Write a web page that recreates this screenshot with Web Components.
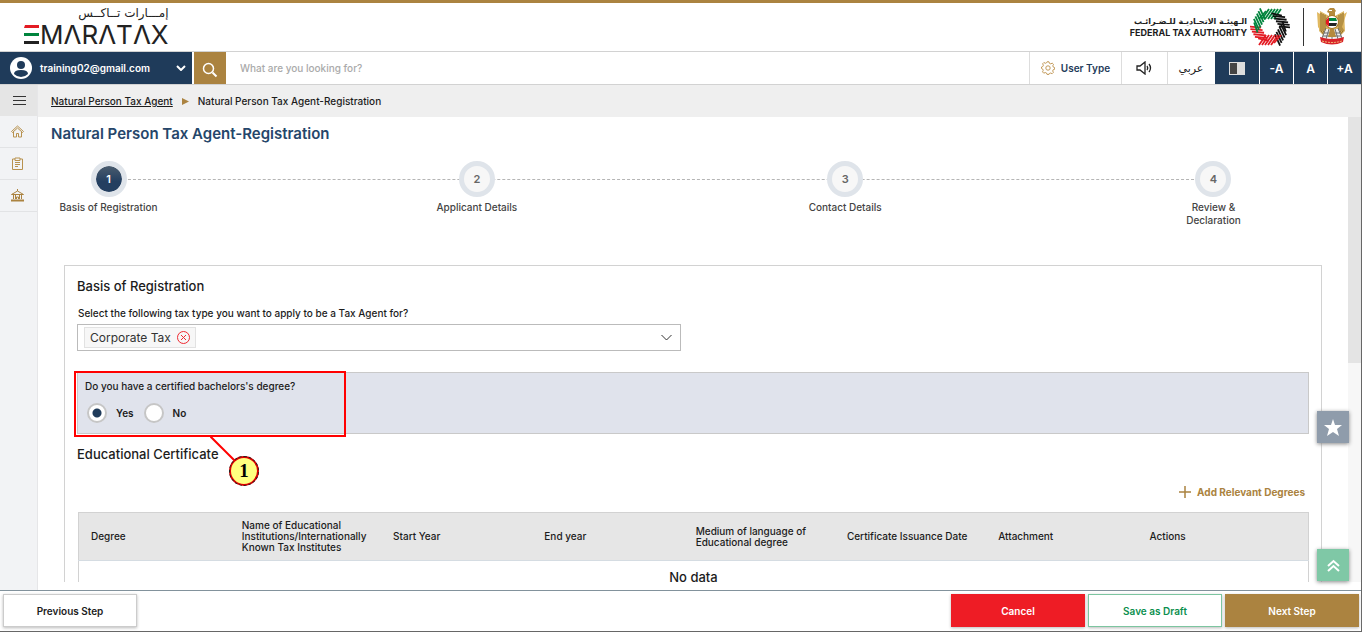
<!DOCTYPE html>
<html lang="en">
<head>
<meta charset="UTF-8">
<meta name="viewport" content="width=device-width, initial-scale=1">
<title>EmaraTax - Natural Person Tax Agent-Registration</title>
<style>
  html, body {
    height: 100%;
  }
  body {
    --navy: #1f3b5a;
    --gold: #ab8340;
    --line: #d2d2d2;
    --text: #1c1c1c;
    margin: 0;
    padding: 0 4px 5px 0;
    box-sizing: border-box;
    background: #fff;
    color: var(--text);
    font-family: Inter, "DejaVu Sans", sans-serif;
    font-size: 10px;
    font-weight: 500;
    overflow: hidden;
  }
</style>
</head>
<body>
<tax-app>
  <tax-header slot="header"></tax-header>
  <tax-toolbar slot="toolbar" user="training02@gmail.com"></tax-toolbar>
  <tax-sidebar slot="sidebar"></tax-sidebar>
  <tax-breadcrumb slot="breadcrumb">
    <a href="#agent" slot="parent">Natural Person Tax Agent</a>
    Natural Person Tax Agent-Registration
  </tax-breadcrumb>

  <page-title>Natural Person Tax Agent-Registration</page-title>
  <step-bar>
    <step-item number="1" active>Basis of Registration</step-item>
    <step-item number="2">Applicant Details</step-item>
    <step-item number="3">Contact Details</step-item>
    <step-item number="4">Review &amp; Declaration</step-item>
  </step-bar>
  <form-panel>
    <section-title>Basis of Registration</section-title>
    <tag-select label="Select the following tax type you want to apply to be a Tax Agent for?" value="Corporate Tax"></tag-select>
    <yes-no-question label="Do you have a certified bachelors's degree?">
      <call-out>1</call-out>
    </yes-no-question>
    <section-title>Educational Certificate</section-title>
    <degree-table></degree-table>
  </form-panel>

  <float-actions slot="float"></float-actions>
  <action-bar slot="footer"></action-bar>
</tax-app>

<script>
// Base class: every element only has to give its markup and its style
class TaxElement extends HTMLElement {
  constructor() {
    super();
    this.attachShadow({ mode: 'open' });
  }
  getTemplate() {
    const template = document.createElement('template');
    template.innerHTML = `
      <style>
        :host, *, *::before, *::after { box-sizing: border-box; }
        button, input, select { font: inherit; color: inherit; margin: 0; padding: 0; border: 0; background: none; border-radius: 0; }
        button { cursor: pointer; }
        svg { display: block; flex: none; }
        ${this.getStyle()}
      </style>
      ${this.getMarkup()}`;
    return template;
  }
  getMarkup() {
    return '<slot></slot>';
  }
  getStyle() {
    return '';
  }
  render() {
    this.shadowRoot.appendChild(this.getTemplate().content.cloneNode(true));
  }
  connectedCallback() {
    if (!this.shadowRoot.childNodes.length) this.render();
  }
}

// Page frame
class TaxApp extends TaxElement {
  getMarkup() {
    return `
      <slot name="header"></slot>
      <slot name="toolbar"></slot>
      <div class="body">
        <slot name="sidebar"></slot>
        <div class="column">
          <slot name="breadcrumb"></slot>
          <div class="view">
            <main><slot></slot></main>
            <div class="track"><div class="thumb"></div></div>
          </div>
        </div>
        <slot name="float"></slot>
      </div>
      <slot name="footer"></slot>`;
  }
  getStyle() {
    return `
      :host { display: flex; flex-direction: column; height: 100%; border-right: 1px solid #666; border-bottom: 1px solid #666; }
      .body { flex: 1; display: flex; min-height: 0; position: relative; }
      .column { flex: 1; min-width: 0; display: flex; flex-direction: column; }
      .view { flex: 1; min-height: 0; display: flex; padding-bottom: 8px; }
      main { flex: 1; min-width: 0; padding: 7px 26px 0 13px; overflow: hidden; }
      .track { width: 13px; background: #f7f7f7; }
      .thumb { height: 53%; background: #e4e4e4; }`;
  }
}
customElements.define('tax-app', TaxApp);

// Top strip with the two logos
class TaxHeader extends TaxElement {
  // Six blades of parallel stripes turned round the centre
  getRing() {
    const colors = ['#00843d', '#111', '#111', '#e31b23', '#e31b23', '#00843d'];
    return colors.map((color, i) => {
      let lines = '';
      for (let n = 0; n < 6; n++) {
        const x = -11 + n * 3;
        lines += `<path d="M${x} -8 L${x + 7} ${n === 0 ? -16 : -18}"/>`;
      }
      return `<g stroke="${color}" transform="rotate(${i * 60})">${lines}</g>`;
    }).join('');
  }
  getMarkup() {
    return `
      <div class="brand">
        <span class="ar" lang="ar" dir="rtl">إمـــارات تــاكــس</span>
        <span class="en">
          <svg width="15" height="20" viewBox="0 0 15 20"><path fill="#e31b23" d="M1 0h14v3H0z"/><path fill="#00843d" d="M0 8h15v3H0z"/><path fill="#222" d="M0 16h15v3H0z"/></svg><span>MΛRΛTΛX</span>
        </span>
      </div>
      <div class="authority">
        <div class="name">
          <span lang="ar" dir="rtl">الـهيئـة الاتحـاديـة للـضـرائـب</span>
          <span>FEDERAL TAX AUTHORITY</span>
        </div>
        <svg width="40" height="40" viewBox="-20 -20 40 40" fill="none" stroke-width="1.800">${this.getRing()}</svg>
        <i></i>
        <svg width="30" height="38" viewBox="0 0 30 38">
          <path fill="#dcb765" d="M3 3l9 5h6l9-5 1 20-7 7H9l-7-7z"/>
          <g fill="none" stroke="#8f6a24" stroke-width="1">
            <path d="M4 5v18l4 5M6 6v17l3 4M8 7v15M26 5v18l-4 5M24 6v17l-3 4M22 7v15"/>
          </g>
          <path fill="#e0b860" d="M0 4l3 2v16l-2-3zM30 4l-3 2v16l-2-3z"/>
          <path fill="#b58a3c" d="M11 2l2-2h4l2 3-1 1v5h-6V5l-2-1z"/>
          <path fill="#fff" d="M12 2h3v1h-3z"/>
          <circle cx="15" cy="14" r="7" fill="#a87a2a"/><circle cx="15" cy="14" r="6" fill="#fff"/>
          <path fill="#00843d" d="M11 10h8l1 3h-8z"/><path fill="#222" d="M12 15h8l-1 3h-7z"/><path fill="#e31b23" d="M9 12l3-3v10l-3-3z"/>
          <path fill="#eee" d="M9 21h12l4 9H5z"/>
          <path fill="none" stroke="#6d6d6d" stroke-width="1" d="M9 20 5 30M12 21 9 31M15 21v11M18 21l3 10M21 20l4 10M7 25h16M6 28h18"/>
          <path fill="#b58a3c" d="M13 21h4l2 8h-8z"/>
          <path fill="#d8232a" d="M3 29q12 4 24 0l-1 5q-11 5-22 0z"/>
          <path fill="none" stroke="#f0c27a" stroke-width="1" stroke-dasharray="2 1" d="M5 33q10 3 20 0"/>
        </svg>
      </div>`;
  }
  getStyle() {
    return `
      :host { display: flex; justify-content: space-between; height: 52px; padding: 0 14px 0 24px; border-top: 3px solid var(--gold); border-bottom: 1px solid var(--line); }
      .brand { display: flex; flex-direction: column; color: #222; }
      .ar { font: 12px/20px "DejaVu Sans", sans-serif; text-align: left; align-self: flex-end; }
      .en { display: flex; align-items: center; gap: 1px; font-size: 26px; line-height: 24px; font-weight: 400; }
      .authority { display: flex; align-items: center; gap: 3px; }
      .name { display: flex; flex-direction: column; align-items: flex-end; font-size: 9px; line-height: 11px; font-weight: 700; }
      .name :first-child { font-family: "DejaVu Sans", sans-serif; font-size: 8px; }
      i { width: 1px; height: 38px; margin: 0 10px; background: #333; }`;
  }
}
customElements.define('tax-header', TaxHeader);

// User menu, search and accessibility tools
class TaxToolbar extends TaxElement {
  getMarkup() {
    return `
      <button class="user">
        <svg width="22" height="22" viewBox="0 0 22 22"><circle cx="11" cy="11" r="11" fill="#fff"/><circle cx="11" cy="8" r="4" fill="#1f3b5a"/><path fill="#1f3b5a" d="M4 17q0-4 7-4t7 4q-3 3-7 3t-7-3z"/></svg>
        <span>${this.getAttribute('user')}</span>
        <svg width="10" height="6" viewBox="0 0 10 6" fill="none" stroke="#fff" stroke-width="2"><path d="M1 1l4 4 4-4"/></svg>
      </button>
      <button class="search" aria-label="Search">
        <svg width="16" height="16" viewBox="0 0 16 16" fill="none" stroke="#fff"><circle cx="6.500" cy="6.500" r="5" stroke-width="1.500"/><path stroke-width="2" d="M10.500 10.500 14.500 14.500"/></svg>
      </button>
      <input type="search" placeholder="What are you looking for?" aria-label="What are you looking for?">
      <button class="type">
        <svg width="14" height="14" viewBox="0 0 14 14" fill="none" stroke="#c39a5a"><path d="M6 .8h2l.4 1.500 1.400.6 1.400-.8 1.300 1.300-.7 1.400.5 1.300 1.300.4v1.800l-1.400.4-.5 1.300.7 1.400-1.300 1.300-1.400-.7-1.400.5L8 13.400H6l-.5-1.400-1.300-.5-1.400.7-1.300-1.300.7-1.400L1.700 8 .5 7.500v-1.500l1.300-.5.6-1.300-.8-1.400 1.300-1.300 1.400.8 1.300-.6z"/><circle cx="7" cy="7" r="2.200"/></svg>
        User Type
      </button>
      <button class="sound" aria-label="Listen">
        <svg width="17" height="14" viewBox="0 0 17 14" fill="none" stroke="#222"><path stroke-width="1.300" d="M1 5h3l5-4v12l-5-4H1z"/><path stroke-width="1.300" d="M11 5q1.500 2 0 4M13 3q3 4 0 8"/></svg>
      </button>
      <button class="lang" lang="ar">عربي</button>
      <button class="dark wide" aria-label="Contrast">
        <svg width="16" height="13" viewBox="0 0 16 13"><path fill="#ddd" d="M0 0h16v13H0z"/><path fill="#444" d="M1 1h7v11H1z"/></svg>
      </button>
      <button class="dark">-A</button>
      <button class="dark">A</button>
      <button class="dark">+A</button>`;
  }
  getStyle() {
    return `
      :host { display: flex; height: 33px; border-bottom: 1px solid var(--line); }
      button { display: flex; align-items: center; justify-content: center; }
      .user { width: 192px; gap: 8px; padding: 0 6px 0 10px; background: var(--navy); color: #fff; font-weight: 600; }
      .user span { flex: 1; text-align: left; }
      .search { width: 32px; margin-left: 2px; padding-top: 4px; background: var(--gold); }
      input { flex: 1; min-width: 0; padding: 0 14px; outline: none; }
      input::placeholder { color: #aaa; opacity: 1; }
      .type, .sound, .lang { border-left: 1px solid #ddd; }
      .type { width: 92px; gap: 6px; color: var(--navy); font-weight: 600; }
      .sound { width: 46px; }
      .lang { width: 47px; font-family: "DejaVu Sans", sans-serif; font-size: 11px; }
      .dark { width: 33px; margin-left: 1px; background: var(--navy); color: #fff; font-weight: 600; font-size: 12px; }
      .wide { width: 44px; }`;
  }
}
customElements.define('tax-toolbar', TaxToolbar);

class TaxSidebar extends TaxElement {
  getMarkup() {
    return `
      <button class="menu" aria-label="Menu">
        <svg width="13" height="11" viewBox="0 0 13 11" stroke="#333" stroke-width="1"><path d="M0 1.500h13M0 5.500h13M0 9.500h13"/></svg>
      </button>
      <a href="#home" aria-label="Home">
        <svg width="13" height="13" viewBox="0 0 13 13" fill="none" stroke="#b8924f"><path d="M.5 6.500 6.500 1l6 5.500-1 1-5-4.500-5 4.500zM2.500 7v5h3V8.500h2V12h3V7"/></svg>
      </a>
      <a href="#tasks" aria-label="Tasks">
        <svg width="11" height="13" viewBox="0 0 11 13" fill="none" stroke="#b8924f"><path d="M3 2H.5v10.500h10V2H8M3 1h5v2.500H3zM3 5.500h5M3 7.500h5M3 9.500h3"/></svg>
      </a>
      <a href="#authority" aria-label="Authority">
        <svg width="13" height="13" viewBox="0 0 13 13" fill="none" stroke="#ab8340"><path d="M.5 5.500 6.500 2l6 3.500zM2.500 6v4M4.500 6v4M8.500 6v4M10.500 6v4M6.500 0v2M5.500 10V8h2v2"/><path stroke-width="2" d="M0 11.500h13"/></svg>
      </a>`;
  }
  getStyle() {
    return `
      :host { display: flex; flex-direction: column; width: 38px; background: #f2f3f5; border-right: 1px solid #e6e6e8; }
      .menu, a { display: flex; align-items: center; justify-content: center; height: 32px; padding-right: 2px; }
      .menu { height: 31px; background: #e5e5e5; padding-left: 4px; }
      a { border-bottom: 1px solid #e2e3e5; }`;
  }
}
customElements.define('tax-sidebar', TaxSidebar);

class TaxBreadcrumb extends TaxElement {
  getMarkup() {
    return `
      <slot name="parent"></slot>
      <svg width="7" height="7" viewBox="0 0 7 7"><path fill="#ab8340" d="M0 0l7 3.500L0 7z"/></svg>
      <span><slot></slot></span>`;
  }
  getStyle() {
    return `
      :host { display: flex; align-items: center; gap: 9px; height: 32px; padding-left: 13px; background: #efefef; }
      ::slotted(a) { color: inherit; }`;
  }
}
customElements.define('tax-breadcrumb', TaxBreadcrumb);

class PageTitle extends TaxElement {
  getMarkup() {
    return '<h1><slot></slot></h1>';
  }
  getStyle() {
    return `
      :host { display: block; }
      h1 { margin: 0; font-size: 15px; line-height: 20px; font-weight: 600; color: #25466a; }`;
  }
}
customElements.define('page-title', PageTitle);

class SectionTitle extends TaxElement {
  getMarkup() {
    return '<h2><slot></slot></h2>';
  }
  getStyle() {
    return `
      :host { display: block; }
      h2 { margin: 0; font-size: 13px; line-height: 20px; font-weight: 500; }`;
  }
}
customElements.define('section-title', SectionTitle);

// Wizard steps joined by one dashed line
class StepBar extends TaxElement {
  getStyle() {
    return `
      :host { display: flex; justify-content: space-between; position: relative; margin: 17px 51px 0 0; }
      :host::before { content: ""; position: absolute; left: 57px; right: 57px; top: 18px; border-top: 1px dashed #b5b5b5; }`;
  }
}
customElements.define('step-bar', StepBar);

class StepItem extends TaxElement {
  getMarkup() {
    return `
      <b>${this.getAttribute('number')}</b>
      <span><slot></slot></span>`;
  }
  getStyle() {
    return `
      :host { display: flex; flex-direction: column; align-items: center; gap: 4px; width: 115px; height: 66px; position: relative; color: #444; line-height: 13px; text-align: center; }
      b { display: flex; align-items: center; justify-content: center; width: 36px; height: 36px; border: 5px solid #dfe4ea; border-radius: 50%; background: #f7f7f7; font-size: 11px; font-weight: 600; color: #666; }
      span { max-width: 115px; }
      :host([number="4"]) span { max-width: 70px; }
      :host([active]) b { background: linear-gradient(#4a5c6e, #243f60 60%); background-clip: padding-box; color: #fff; }`;
  }
}
customElements.define('step-item', StepItem);

class FormPanel extends TaxElement {
  getStyle() {
    return `
      :host { display: block; margin: 38px 0 0 13px; padding: 10px 12px 40px; border: 1px solid var(--line); }`;
  }
}
customElements.define('form-panel', FormPanel);

// Drop-down that shows its choices as removable tags
class TagSelect extends TaxElement {
  getMarkup() {
    return `
      <label for="type">${this.getAttribute('label')}</label>
      <div class="box">
        <span class="tag">${this.getAttribute('value')}
          <button aria-label="Remove"><svg width="13" height="13" viewBox="0 0 13 13" fill="none" stroke="#ee2a32"><circle cx="6.500" cy="6.500" r="6"/><path d="M4 4l5 5M9 4l-5 5"/></svg></button>
        </span>
        <select id="type"><option></option></select>
        <svg width="11" height="7" viewBox="0 0 11 7" fill="none" stroke="#333"><path d="M.5 1l5 5 5-5"/></svg>
      </div>`;
  }
  getStyle() {
    return `
      :host { display: block; margin-top: 9px; }
      label { display: block; margin-bottom: 3px; padding-left: 1px; line-height: 16px; }
      .box { display: flex; align-items: center; width: 49%; height: 27px; padding: 0 8px 0 6px; border: 1px solid #bbb; }
      .tag { display: flex; align-items: center; gap: 6px; height: 21px; padding: 0 5px; border: 1px solid #e2e2e2; background: #f7f7f7; font-size: 12px; font-weight: 400; color: #333; }
      select { flex: 1; min-width: 0; height: 100%; appearance: none; outline: none; }`;
  }
}
customElements.define('tag-select', TagSelect);

class YesNoQuestion extends TaxElement {
  getMarkup() {
    return `
      <fieldset>
        <legend>${this.getAttribute('label')}</legend>
        <div class="choices">
          <input type="radio" name="degree" id="yes" checked><label for="yes">Yes</label>
          <input type="radio" name="degree" id="no"><label for="no">No</label>
        </div>
      </fieldset>
      <slot></slot>`;
  }
  getStyle() {
    return `
      :host { display: block; position: relative; margin: 21px 0 10px; padding: 5px 7px 10px; background: #e0e3ec; border: 1px solid #c9c9c9; }
      fieldset { margin: 0; padding: 0; border: 0; }
      legend { padding: 0; line-height: 16px; }
      .choices { display: flex; align-items: center; margin-top: 9px; padding-left: 2px; }
      input { appearance: none; width: 20px; height: 20px; border: 2px solid #c6c6c6; border-radius: 50%; background: #fff; }
      input:checked { background: radial-gradient(circle, var(--navy) 4px, #fff 5px); }
      label { margin: 0 10px 0 9px; font-weight: 600; }`;
  }
}
customElements.define('yes-no-question', YesNoQuestion);

// Red frame with a numbered balloon, laid over the question
class CallOut extends TaxElement {
  getMarkup() {
    return `
      <svg width="28" height="28" viewBox="0 0 28 28" stroke="#f00" stroke-width="2"><path d="M0 0l28 28"/></svg>
      <b><slot></slot></b>`;
  }
  getStyle() {
    return `
      :host { position: absolute; left: -4px; top: -2px; width: 272px; height: 66px; border: 2px solid #f00; }
      svg { position: absolute; left: 134px; top: 63px; }
      b { position: absolute; left: 153px; top: 83px; width: 30px; height: 30px; border: 2px solid #d00; outline: 1px dashed #222; outline-offset: -1px; border-radius: 50%; background: #ffff80; color: #000; font: bold 19px/26px "Liberation Serif", serif; text-align: center; }`;
  }
}
customElements.define('call-out', CallOut);

class DegreeTable extends TaxElement {
  getMarkup() {
    const columns = ['Degree', 'Name of Educational Institutions/Internationally Known Tax Institutes', 'Start Year', 'End year',
      'Medium of language of Educational degree', 'Certificate Issuance Date', 'Attachment', 'Actions'];
    return `
      <button>
        <svg width="12" height="12" viewBox="0 0 12 12" stroke="#ab8340" stroke-width="1.500"><path d="M6 0v12M0 6h12"/></svg>
        Add Relevant Degrees
      </button>
      <table>
        <thead><tr>${columns.map(name => `<th>${name}</th>`).join('')}</tr></thead>
        <tbody><tr><td colspan="8">No data</td></tr></tbody>
      </table>`;
  }
  getStyle() {
    return `
      :host { display: flex; flex-direction: column; align-items: flex-end; gap: 12px; padding-left: 1px; margin-top: 20px; }
      button { display: flex; align-items: center; gap: 6px; margin-right: 4px; line-height: 16px; font-weight: 700; color: var(--gold); }
      table { width: 100%; table-layout: fixed; border-collapse: collapse; border: 1px solid var(--line); }
      th { width: 12.3%; height: 48px; padding: 0 0 0 12px; border-bottom: 1px solid #d5dce2; background: #e6e6e6; line-height: 11px; font-weight: 500; text-align: left; }
      th:last-child { width: auto; }
      td { height: 33px; padding: 0; text-align: center; font-size: 13px; }`;
  }
}
customElements.define('degree-table', DegreeTable);

class FloatActions extends TaxElement {
  getMarkup() {
    return `
      <button aria-label="Favourites"><svg width="18" height="17" viewBox="0 0 18 17"><path fill="#fff" d="M9 0l2 6h7l-5 4 2 7-6-4-6 4 2-7-5-4h7z"/></svg></button>
      <button class="up" aria-label="Back to top"><svg width="13" height="13" viewBox="0 0 13 13" fill="none" stroke="#fff" stroke-width="2"><path d="M1 7l5.500-5L12 7M1 12l5.500-5L12 12"/></svg></button>`;
  }
  getStyle() {
    return `
      :host { position: absolute; right: 12px; bottom: 9px; display: flex; flex-direction: column; gap: 106px; }
      button { display: flex; align-items: center; justify-content: center; width: 32px; height: 32px; background: #8f9cab; box-shadow: 0 1px 4px #888; }
      .up { background: #7fc8a6; }`;
  }
}
customElements.define('float-actions', FloatActions);

class ActionBar extends TaxElement {
  getMarkup() {
    return `
      <button class="previous">Previous Step</button>
      <button class="cancel">Cancel</button>
      <button class="draft">Save as Draft</button>
      <button class="next">Next Step</button>`;
  }
  getStyle() {
    return `
      :host { display: flex; gap: 3px; height: 41px; padding: 3px 2px 4px 3px; border-top: 1px solid #82929c; background: #fff; }
      button { width: 134px; font-weight: 600; box-shadow: 0 1px 3px #bbb; }
      .previous { margin-right: auto; border: 1px solid #ccc; }
      .cancel { background: #ee1c25; color: #fff; }
      .draft { border: 1px solid #7cc5a0; color: #0c8f4f; }
      .next { background: var(--gold); color: #fff; }`;
  }
}
customElements.define('action-bar', ActionBar);
</script>
</body>
</html>
